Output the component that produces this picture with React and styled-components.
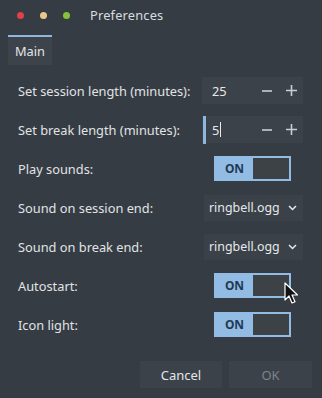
import styled, { createGlobalStyle } from "styled-components";

const Global = createGlobalStyle`
  html, body {
    margin: 0;
    padding: 0;
    background: #353c44;
  }
  body {
    font-family: "Noto Sans", "Open Sans", sans-serif;
    font-size: 12.8px;
    color: #dfe1e3;
  }
`;

const Window = styled.div`
  position: relative;
  width: 322px;
  height: 398px;
  background: #353c44;
  display: flex;
  flex-direction: column;
  overflow: hidden;
`;

const TitleBar = styled.div`
  height: 30px;
  display: flex;
  align-items: center;
  padding-left: 17px;
  gap: 16px;
`;

const Dot = styled.span`
  width: 7px;
  height: 7px;
  border-radius: 50%;
  background: ${(p) => p.$color};
`;

const Title = styled.span`
  margin-left: 4px;
  font-size: 12.8px;
  color: #d9dcdf;
  letter-spacing: 0.2px;
`;

const TabBar = styled.div`
  padding: 5px 0 0 8px;
  display: flex;
`;

const Tab = styled.div`
  width: 44px;
  height: 28px;
  border-top: 2px solid #8fb6dc;
  background: #3c434b;
  display: flex;
  align-items: center;
  justify-content: center;
  color: #e3e5e7;
`;

const Form = styled.div`
  display: grid;
  grid-template-columns: 1fr 101px;
  grid-auto-rows: 27px;
  row-gap: 12px;
  align-items: center;
  padding: 12px 19px 0 18px;
`;

const Label = styled.span`
  color: #e1e3e5;
`;

const SpinBox = styled.div`
  position: relative;
  height: 27px;
  background: #3b4249;
  display: flex;
  align-items: center;
  padding-left: 10px;
`;

const FocusBar = styled.span`
  position: absolute;
  left: 1px;
  top: 0;
  bottom: -1px;
  width: 3px;
  background: #8fb6dc;
`;

const SpinValue = styled.span`
  flex: 1;
  display: flex;
  align-items: center;
  color: #e6e8ea;
`;

const Caret = styled.span`
  width: 1px;
  height: 15px;
  margin-left: 1px;
  background: #e6e8ea;
`;

const SpinButton = styled.span`
  width: 24px;
  display: flex;
  justify-content: center;
  align-items: center;
  height: 100%;
`;

const SwitchCell = styled.div`
  display: flex;
  justify-content: center;
`;

const Switch = styled.div`
  width: 77px;
  height: 25px;
  box-sizing: border-box;
  border: 2px solid #93bce4;
  background: #93bce4;
  display: flex;
`;

const SwitchOn = styled.span`
  width: 37px;
  display: flex;
  align-items: center;
  justify-content: center;
  font-weight: 700;
  font-size: 12px;
  color: #1f3a57;
`;

const SwitchKnob = styled.span`
  flex: 1;
  background: #3d4247;
`;

const Combo = styled.div`
  justify-self: end;
  height: 26px;
  width: 99px;
  box-sizing: border-box;
  background: #3a4148;
  display: flex;
  align-items: center;
  justify-content: space-between;
  padding: 0 6px 0 5px;
  color: #e6e8ea;
  font-size: 12.4px;
`;

const Footer = styled.div`
  margin-top: auto;
  display: flex;
  justify-content: flex-end;
  gap: 7px;
  padding: 0 10px 10px 0;
`;

const Button = styled.div`
  width: ${(p) => p.$w}px;
  height: 27px;
  background: #3b4249;
  display: flex;
  align-items: center;
  justify-content: center;
  color: ${(p) => (p.$disabled ? "#7d848b" : "#e3e5e7")};
  font-size: 13px;
`;

const Cursor = styled.svg`
  position: absolute;
  left: 284px;
  top: 282px;
`;

function Minus() {
  return (
    <svg width="10" height="10" viewBox="0 0 10 10">
      <path d="M0 5h10" stroke="#c9cdd1" strokeWidth="1.6" />
    </svg>
  );
}

function Plus() {
  return (
    <svg width="11" height="11" viewBox="0 0 11 11">
      <path d="M0 5.5h11M5.5 0v11" stroke="#c9cdd1" strokeWidth="1.6" />
    </svg>
  );
}

function Chevron() {
  return (
    <svg width="9" height="6" viewBox="0 0 9 6">
      <path d="M1 1l3.5 3.5L8 1" stroke="#e6e8ea" strokeWidth="1.5" fill="none" />
    </svg>
  );
}

function Spin({ value, focused }) {
  return (
    <SpinBox>
      {focused && <FocusBar />}
      <SpinValue>
        {value}
        {focused && <Caret />}
      </SpinValue>
      <SpinButton>
        <Minus />
      </SpinButton>
      <SpinButton>
        <Plus />
      </SpinButton>
    </SpinBox>
  );
}

function Toggle() {
  return (
    <SwitchCell>
      <Switch>
        <SwitchOn>ON</SwitchOn>
        <SwitchKnob />
      </Switch>
    </SwitchCell>
  );
}

function Select({ value }) {
  return (
    <Combo>
      {value}
      <Chevron />
    </Combo>
  );
}

export default function App() {
  return (
    <Window>
      <Global />
      <TitleBar>
        <Dot $color="#e0404a" />
        <Dot $color="#e9c98a" />
        <Dot $color="#86c23a" />
        <Title>Preferences</Title>
      </TitleBar>
      <TabBar>
        <Tab>Main</Tab>
      </TabBar>
      <Form>
        <Label>Set session length (minutes):</Label>
        <Spin value="25" />
        <Label>Set break length (minutes):</Label>
        <Spin value="5" focused />
        <Label>Play sounds:</Label>
        <Toggle />
        <Label>Sound on session end:</Label>
        <Select value="ringbell.ogg" />
        <Label>Sound on break end:</Label>
        <Select value="ringbell.ogg" />
        <Label>Autostart:</Label>
        <Toggle />
        <Label>Icon light:</Label>
        <Toggle />
      </Form>
      <Footer>
        <Button $w={82}>Cancel</Button>
        <Button $w={83} $disabled>
          OK
        </Button>
      </Footer>
      <Cursor width="14" height="22" viewBox="0 0 14 22">
        <path
          d="M1 1v17l4-4 3 7 3-1.3-3-6.7h5.5z"
          fill="#111"
          stroke="#fff"
          strokeWidth="1.2"
          strokeLinejoin="round"
        />
      </Cursor>
    </Window>
  );
}
